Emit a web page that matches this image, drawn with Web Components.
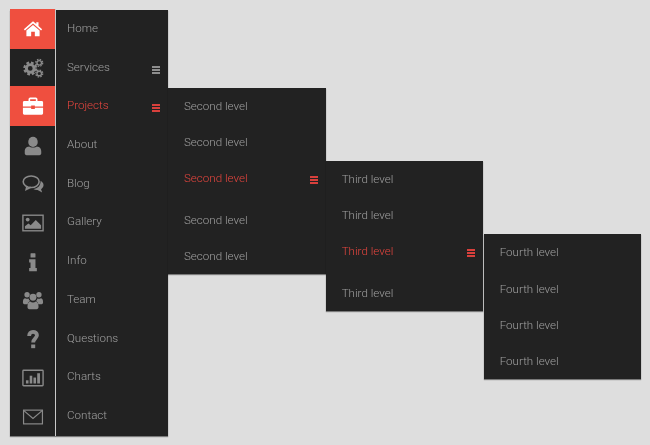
<!DOCTYPE html>
<html lang="en">
<head>
<meta charset="utf-8">
<title>Menu</title>
<style>
  html, body { margin: 0; height: 100%; background: #dedede; }
  body { padding: 10px; box-sizing: border-box; font-family: Roboto, "Liberation Sans", sans-serif; font-weight: 300; overflow: hidden; }
</style>
</head>
<body>
<side-nav>
  <nav-item icon="home" active>Home</nav-item>
  <nav-item icon="cogs" has-menu>Services</nav-item>
  <nav-item icon="briefcase" active current has-menu>Projects
    <fly-menu slot="menu" style="top:.6px">
      <menu-row>Second level</menu-row>
      <menu-row>Second level</menu-row>
      <menu-row current has-menu>Second level
        <fly-menu slot="menu" style="top:.5px">
          <menu-row>Third level</menu-row>
          <menu-row>Third level</menu-row>
          <menu-row current has-menu>Third level
            <fly-menu slot="menu" style="top:1.2px;left:.3px">
              <menu-row>Fourth level</menu-row>
              <menu-row>Fourth level</menu-row>
              <menu-row>Fourth level</menu-row>
              <menu-row>Fourth level</menu-row>
            </fly-menu>
          </menu-row>
          <menu-row>Third level</menu-row>
        </fly-menu>
      </menu-row>
      <menu-row>Second level</menu-row>
      <menu-row>Second level</menu-row>
    </fly-menu>
  </nav-item>
  <nav-item icon="user">About</nav-item>
  <nav-item icon="comments">Blog</nav-item>
  <nav-item icon="picture">Gallery</nav-item>
  <nav-item icon="info">Info</nav-item>
  <nav-item icon="group">Team</nav-item>
  <nav-item icon="question">Questions</nav-item>
  <nav-item icon="chart">Charts</nav-item>
  <nav-item icon="mail">Contact</nav-item>
</side-nav>

<script>
const ICONS = {
  home: '<path fill="currentColor" d="M12 3.5 15.6 6.6V4.5H18V8.7L22 12.2 20.8 13.6 12 6 3.2 13.6 2 12.2Z"/><path fill="currentColor" d="M12 7.6 19.2 13.7V20H14V15H10V20H4.8V13.7Z"/>',
  cogs: '<circle cx="9" cy="12.500" r="4.200" fill="none" stroke="currentColor" stroke-width="3.200"/><circle cx="9" cy="12.500" r="6.400" fill="none" stroke="currentColor" stroke-width="2.400" stroke-dasharray="3 2.03"/>' +
    '<circle cx="18.800" cy="6.400" r="2.500" fill="none" stroke="currentColor" stroke-width="1.500"/><circle cx="18.800" cy="6.400" r="3.800" fill="none" stroke="currentColor" stroke-width="1.400" stroke-dasharray="1.700 1.28"/>' +
    '<circle cx="18.800" cy="18" r="2.500" fill="none" stroke="currentColor" stroke-width="1.500"/><circle cx="18.800" cy="18" r="3.800" fill="none" stroke="currentColor" stroke-width="1.400" stroke-dasharray="1.700 1.28"/>',
  briefcase: '<path fill="none" stroke="currentColor" stroke-width="1.800" d="M8 7V4.600C8 4 8.400 3.600 9 3.600H15C15.600 3.600 16 4 16 4.600V7"/><path fill="currentColor" d="M2.500 6.500H21.500C22.400 6.500 23 7.100 23 8V12.600H14V11.500H10V12.600H1V8C1 7.100 1.600 6.500 2.500 6.500Z"/><path fill="currentColor" d="M1 14H10V15.300H14V14H23V20C23 20.900 22.400 21.500 21.500 21.500H2.500C1.600 21.500 1 20.900 1 20Z"/>',
  user: '<ellipse cx="12" cy="7.500" rx="5.200" ry="5.500" fill="currentColor"/><path fill="currentColor" d="M8 12.500C9 14 15 14 16 12.500 19.800 13 21 15 21 18V20C21 21.200 20.300 22 19 22H5C3.700 22 3 21.200 3 20V18C3 15 4.200 13 8 12.500Z"/>',
  comments: '<ellipse cx="10" cy="9.500" rx="8.700" ry="6.300" fill="none" stroke="currentColor" stroke-width="1.700"/><path fill="none" stroke="currentColor" stroke-width="1.700" d="M5.500 14 4.500 18 9.500 15.500"/><path fill="currentColor" d="M20.300 8.500C22.300 9.700 23.500 11.300 23.500 13.200 23.500 15 22.500 16.500 20.800 17.600L22 21.300 17 18.600C15.300 18.700 13.700 18.300 12.400 17.400 16.800 17.400 20.600 13.800 20.300 8.500Z"/>',
  picture: '<rect x="1" y="3.500" width="22" height="17" fill="none" stroke="currentColor" stroke-width="1.500"/><circle cx="6.200" cy="8.300" r="2.100" fill="currentColor"/><path fill="currentColor" d="M3.200 18.300V15.500L7 12.500 9.500 14.500 15 8.800 20.800 14.500V18.300Z"/>',
  info: '<rect x="9.300" y="2.500" width="5.400" height="4.600" rx=".6" fill="currentColor"/><path fill="currentColor" d="M7.800 9H14.700V18.500H16.200V22H7.800V18.500H9.300V12.500H7.800Z"/>',
  group: '<circle cx="5.500" cy="6.300" r="2.900" fill="currentColor"/><circle cx="18.500" cy="6.300" r="2.900" fill="currentColor"/><circle cx="12" cy="9" r="3.700" fill="currentColor"/><path fill="currentColor" d="M1 14.500C1 11.500 2 10 3.500 10 4.500 10.800 6 10.800 7.200 10.300 7.500 11.500 8 12.500 9 13.200 7.500 13.800 6.500 15 6.200 16.500H2.500C1.500 16.500 1 15.800 1 14.500ZM23 14.500C23 11.500 22 10 20.500 10 19.500 10.800 18 10.800 16.800 10.300 16.500 11.500 16 12.500 15 13.200 16.500 13.800 17.500 15 17.800 16.500H21.500C22.500 16.500 23 15.800 23 14.500Z"/><path fill="currentColor" d="M9 13.500C10.500 15 13.500 15 15 13.500 16.800 14 18 15.800 18 18.500V20C18 21.200 17.200 22 16 22H8C6.800 22 6 21.200 6 20V18.500C6 15.800 7.200 14 9 13.500Z"/>',
  question: '<path fill="none" stroke="currentColor" stroke-width="4.200" d="M7.800 8.800C7.800 5.700 9.700 4.200 12 4.200 14.500 4.200 16.300 5.700 16.300 8 16.300 11.300 12.200 11.300 12.200 15.800"/><rect x="10" y="18" width="4.400" height="4" fill="currentColor"/>',
  chart: '<rect x="1" y="3.500" width="22" height="17" rx=".8" fill="none" stroke="currentColor" stroke-width="1.500"/><rect x="4.300" y="14.500" width="2.800" height="3.500" fill="currentColor"/><rect x="8.400" y="9.500" width="2.800" height="8.500" fill="currentColor"/><rect x="12.500" y="11.500" width="2.800" height="6.500" fill="currentColor"/><rect x="16.600" y="6.800" width="3" height="11.200" fill="currentColor"/>',
  mail: '<rect x="1.700" y="4.500" width="20.600" height="15" fill="none" stroke="currentColor" stroke-width="1.300"/><path fill="none" stroke="currentColor" stroke-width="1.300" d="M2 5 12 13.500 22 5"/>'
};

const BARS = '<svg class="bars" width="8" height="8" viewBox="0 0 8 8" aria-hidden="true"><path fill="currentColor" d="M0 0H8V2H0ZM0 3H8V5H0ZM0 6H8V8H0Z"/></svg>';

class SideNav extends HTMLElement {
  connectedCallback() {
    this.attachShadow({ mode: "open" }).innerHTML = `
      <style>
        :host { display: grid; grid-auto-rows: 1fr; width: 158px; height: 426px; background: #222; box-shadow: 0 1px 1px rgba(0,0,0,.45); position: relative; }
      </style>
      <slot></slot>`;
  }
}

class NavItem extends HTMLElement {
  connectedCallback() {
    const icon = ICONS[this.getAttribute("icon")] || "";
    this.attachShadow({ mode: "open" }).innerHTML = `
      <style>
        :host { display: grid; grid-template-columns: 45px 1fr; position: relative; min-height: 0; font-size: 11.6px; color: #a0a0a0; }
        .icon { display: flex; align-items: center; justify-content: center; color: #8a8a8a; border-right: 1px solid #c9c9c9; width: 45px; }
        :host([active]) .icon { background: #ef4f3f; color: #fff; margin-top: -1px; }
        :host([current]) .text { color: #e8463f; }
        .text { display: flex; align-items: center; justify-content: space-between; padding: 0 8px 3px 11px; margin-left: 1px; }
        .label { will-change: opacity; }
        .bars { margin-top: 6px; color: #8e8e8e; }
        :host([current]) .bars { color: #d8403c; }
        .menu { position: absolute; left: 100%; top: 0; }
      </style>
      <span class="icon"><svg width="22" height="22" viewBox="0 0 24 24" aria-hidden="true">${icon}</svg></span>
      <span class="text"><span class="label"><slot></slot></span>${this.hasAttribute("has-menu") ? BARS : ""}</span>
      <span class="menu"><slot name="menu"></slot></span>`;
  }
}

class FlyMenu extends HTMLElement {
  connectedCallback() {
    this.attachShadow({ mode: "open" }).innerHTML = `
      <style>
        :host { display: block; width: 157.7px; background: #222; box-shadow: 0 1px 1px rgba(0,0,0,.45); position: absolute; left: 0; top: 0; }
      </style>
      <slot></slot>`;
  }
}

class MenuRow extends HTMLElement {
  connectedCallback() {
    this.attachShadow({ mode: "open" }).innerHTML = `
      <style>
        :host { display: flex; justify-content: space-between; position: relative; height: 36.2px; padding: 0 8px 0 16px; font-size: 11.6px; line-height: 36px; color: #a0a0a0; }
        :host([has-menu]) { height: 41.7px; }
        :host([current]) { color: #e8463f; }
        .label { will-change: opacity; }
        .bars { margin-top: 16px; color: #d8403c; }
        .menu { position: absolute; left: 100%; top: 0; }
      </style>
      <span class="label"><slot></slot></span>${this.hasAttribute("has-menu") ? BARS : ""}
      <span class="menu"><slot name="menu"></slot></span>`;
  }
}

customElements.define("side-nav", SideNav);
customElements.define("nav-item", NavItem);
customElements.define("fly-menu", FlyMenu);
customElements.define("menu-row", MenuRow);
</script>
</body>
</html>
